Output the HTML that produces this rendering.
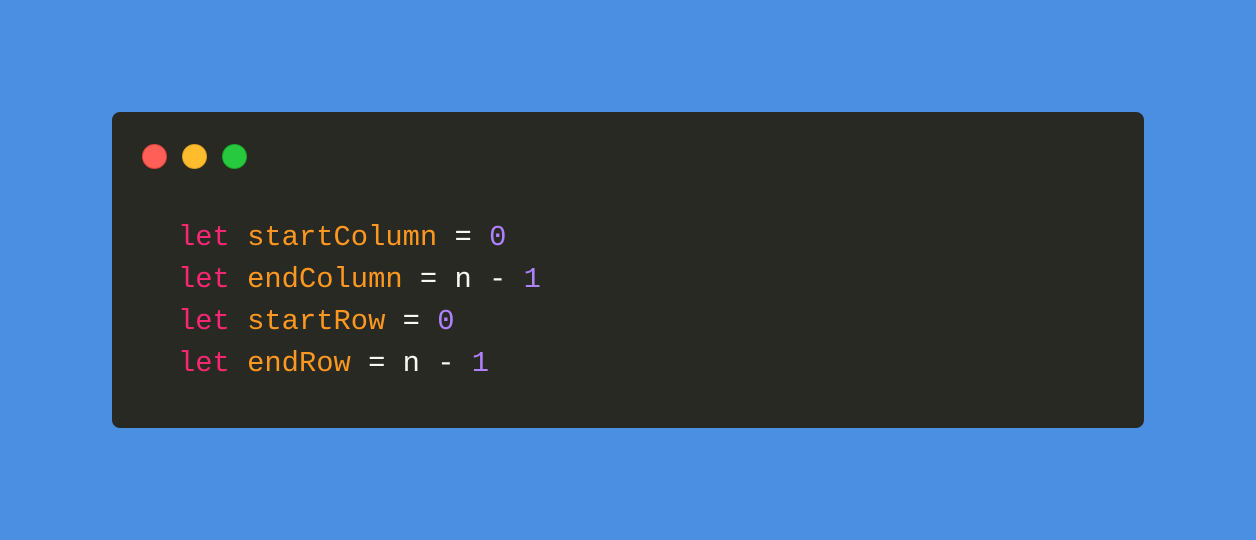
<!DOCTYPE html>
<html><head><style>
html,body{margin:0;padding:0;width:1256px;height:540px;background:#4a8fe1;overflow:hidden}
.win{position:absolute;left:112px;top:112px;width:1032px;height:316px;background:#282923;border-radius:8px}
.dot{position:absolute;top:32px;width:25px;height:25px;border-radius:50%}
pre{position:absolute;left:66px;top:105px;margin:0;font-family:"Liberation Mono",monospace;font-size:28.8px;line-height:42px;color:#f8f8f2}
.k{color:#f92672}.v{color:#fd971f}.n{color:#ae81ff}
</style></head><body>
<div class="win">
<div class="dot" style="left:30px;background:#ff5f56;border:0.5px solid #e0443e;box-sizing:border-box"></div>
<div class="dot" style="left:70px;background:#ffbd2e;border:0.5px solid #dea123;box-sizing:border-box"></div>
<div class="dot" style="left:110px;background:#27c93f;border:0.5px solid #1aab29;box-sizing:border-box"></div>
<pre><span class="k">let</span> <span class="v">startColumn</span> = <span class="n">0</span>
<span class="k">let</span> <span class="v">endColumn</span> = n - <span class="n">1</span>
<span class="k">let</span> <span class="v">startRow</span> = <span class="n">0</span>
<span class="k">let</span> <span class="v">endRow</span> = n - <span class="n">1</span></pre>
</div>
</body></html>
